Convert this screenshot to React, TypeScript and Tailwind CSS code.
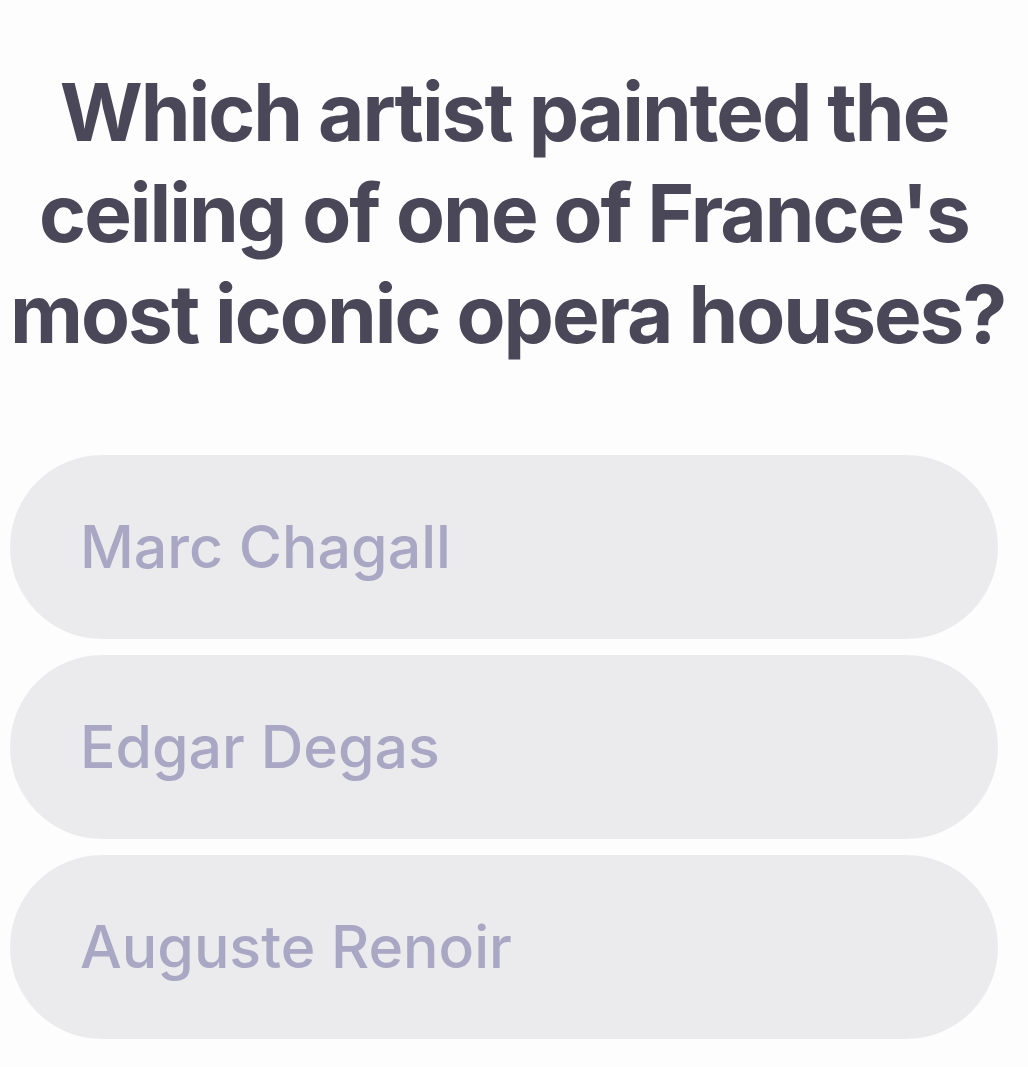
import React from "react";

const options = ["Marc Chagall", "Edgar Degas", "Auguste Renoir"];

const App = () => {
  return (
    <div
      className="min-h-[1067px] w-[1028px] bg-[#fdfdfe] pl-[10px] pr-[30px] pt-[61px]"
      style={{ fontFamily: "Inter, 'Noto Sans', sans-serif" }}>
      <h1 className="text-center text-[80px] leading-[101px] font-bold tracking-[-2px] text-[#4a4858] whitespace-nowrap">
        <span className="block">Which artist painted the</span>
        <span className="block">ceiling of one of France's</span>
        <span className="block">most iconic opera houses?</span>
      </h1>
      <div className="mt-[91px] flex flex-col gap-4">
        {options.map((opt) => (
          <button
            key={opt}
            className="h-[184px] w-full rounded-[92px] bg-[#ebeaed] pl-[70px] text-left text-[59px] font-medium text-[#a9a7c3]">
            {opt}
          </button>
        ))}
      </div>
    </div>
  );
};

export default App;
